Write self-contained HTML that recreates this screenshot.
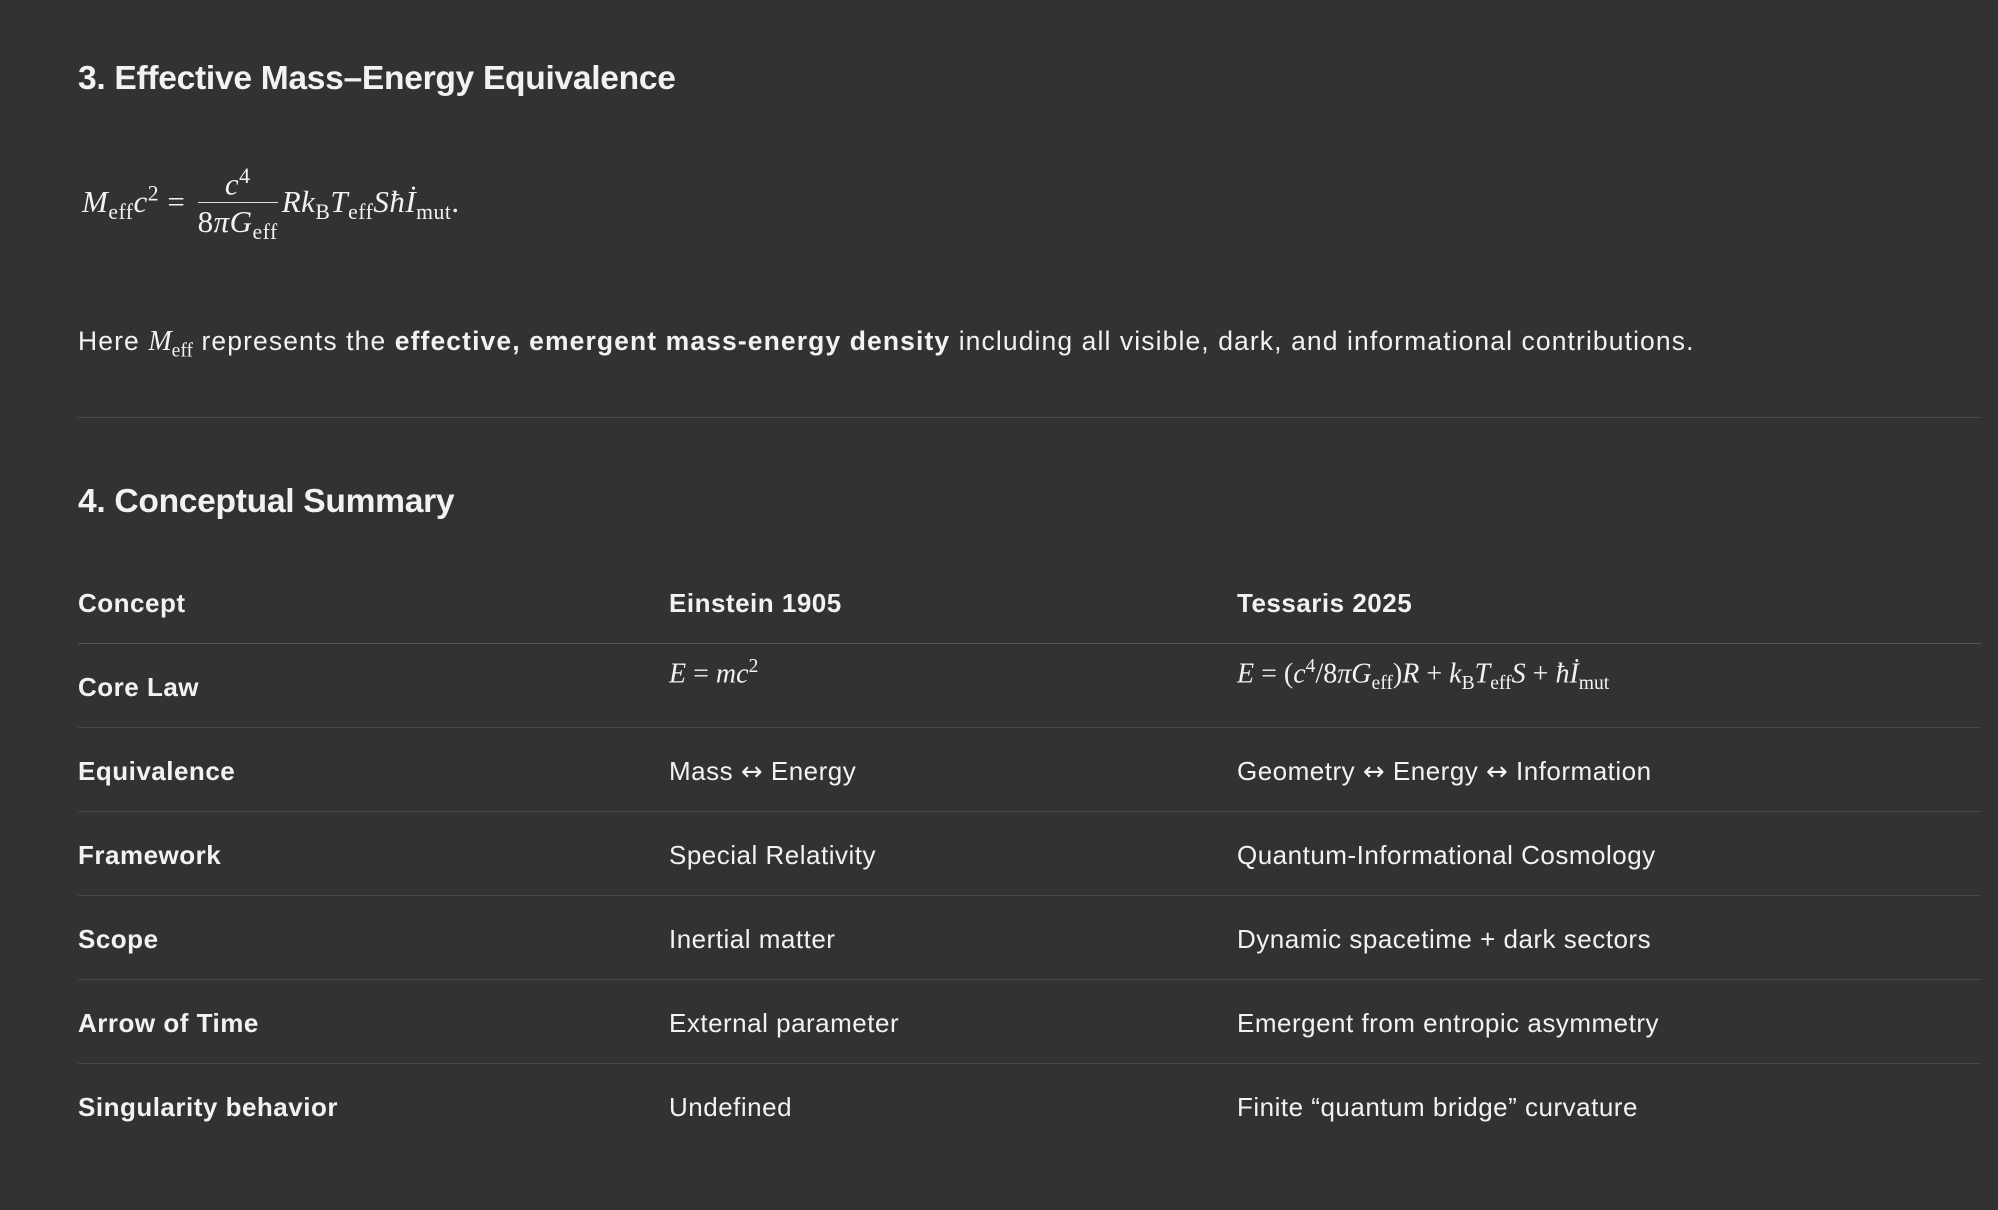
<!DOCTYPE html>
<html><head><meta charset="utf-8"><style>
body{margin:0;width:1998px;height:1210px;background:#323232;color:#f2f2f2;font-family:"Liberation Sans",sans-serif;overflow:hidden;position:relative}
.a{position:absolute;white-space:nowrap}
h2{position:absolute;margin:0;font-size:33.6px;font-weight:bold;left:78px;white-space:nowrap;letter-spacing:-0.3px}
.m{font-family:"Liberation Serif",serif;font-style:italic;letter-spacing:0}
.r{font-style:normal}
sub,sup{font-size:0.7em;font-style:normal}
.t{font-size:26px;line-height:30px;letter-spacing:0.5px}
.p{font-size:26.5px;line-height:30px;letter-spacing:1.1px}
.b{font-weight:bold}
.hl{position:absolute;left:78px;width:1903px;height:1px;background:#484848}
.frac{display:inline-block;vertical-align:middle;text-align:center;margin:0 4px;white-space:nowrap}
.frac>span{display:block;white-space:nowrap}
</style></head><body>
<h2 style="top:60px">3. Effective Mass–Energy Equivalence</h2>
<div class="a m" style="left:82px;top:158px;font-size:31px;line-height:40px;letter-spacing:0.5px">M<sub>eff</sub>c<sup>2</sup> <span class="r">=</span> <span class="frac"><span style="border-bottom:1.5px solid #ddd;padding:0 4px;line-height:36px">c<sup>4</sup></span><span style="line-height:38px"><span class="r">8</span>πG<sub>eff</sub></span></span>Rk<sub>B</sub>T<sub>eff</sub>Sħİ<sub>mut</sub><span class="r">.</span></div>
<div class="a p" style="left:78px;top:326px">Here <span class="m" style="font-size:28px">M<sub>eff</sub></span> represents the <span class="b">effective, emergent mass-energy density</span> including all visible, dark, and informational contributions.</div>
<div class="hl" style="top:417px"></div>
<h2 style="top:483px">4. Conceptual Summary</h2>
<div class="a t b" style="left:78px;top:588px">Concept</div>
<div class="a t b" style="left:669px;top:588px">Einstein 1905</div>
<div class="a t b" style="left:1237px;top:588px">Tessaris 2025</div>
<div class="hl" style="top:643px;background:#555"></div>
<div class="a t b" style="left:78px;top:672px">Core Law</div>
<div class="a m" style="left:669px;top:656px;font-size:28px">E <span class="r">=</span> mc<sup>2</sup></div>
<div class="a m" style="left:1237px;top:656px;font-size:28px">E <span class="r">= (</span>c<sup>4</sup><span class="r">/8</span>πG<sub>eff</sub><span class="r">)</span>R <span class="r">+</span> k<sub>B</sub>T<sub>eff</sub>S <span class="r">+</span> ħİ<sub>mut</sub></div>
<div class="hl" style="top:727px"></div>
<div class="a t b" style="left:78px;top:756px">Equivalence</div>
<div class="a t" style="left:669px;top:756px">Mass <span style="font-family:'DejaVu Sans'">↔</span> Energy</div>
<div class="a t" style="left:1237px;top:756px">Geometry <span style="font-family:'DejaVu Sans'">↔</span> Energy <span style="font-family:'DejaVu Sans'">↔</span> Information</div>
<div class="hl" style="top:811px"></div>
<div class="a t b" style="left:78px;top:840px">Framework</div>
<div class="a t" style="left:669px;top:840px">Special Relativity</div>
<div class="a t" style="left:1237px;top:840px">Quantum-Informational Cosmology</div>
<div class="hl" style="top:895px"></div>
<div class="a t b" style="left:78px;top:924px">Scope</div>
<div class="a t" style="left:669px;top:924px">Inertial matter</div>
<div class="a t" style="left:1237px;top:924px">Dynamic spacetime + dark sectors</div>
<div class="hl" style="top:979px"></div>
<div class="a t b" style="left:78px;top:1008px">Arrow of Time</div>
<div class="a t" style="left:669px;top:1008px">External parameter</div>
<div class="a t" style="left:1237px;top:1008px">Emergent from entropic asymmetry</div>
<div class="hl" style="top:1063px"></div>
<div class="a t b" style="left:78px;top:1092px">Singularity behavior</div>
<div class="a t" style="left:669px;top:1092px">Undefined</div>
<div class="a t" style="left:1237px;top:1092px">Finite “quantum bridge” curvature</div>
</body></html>
